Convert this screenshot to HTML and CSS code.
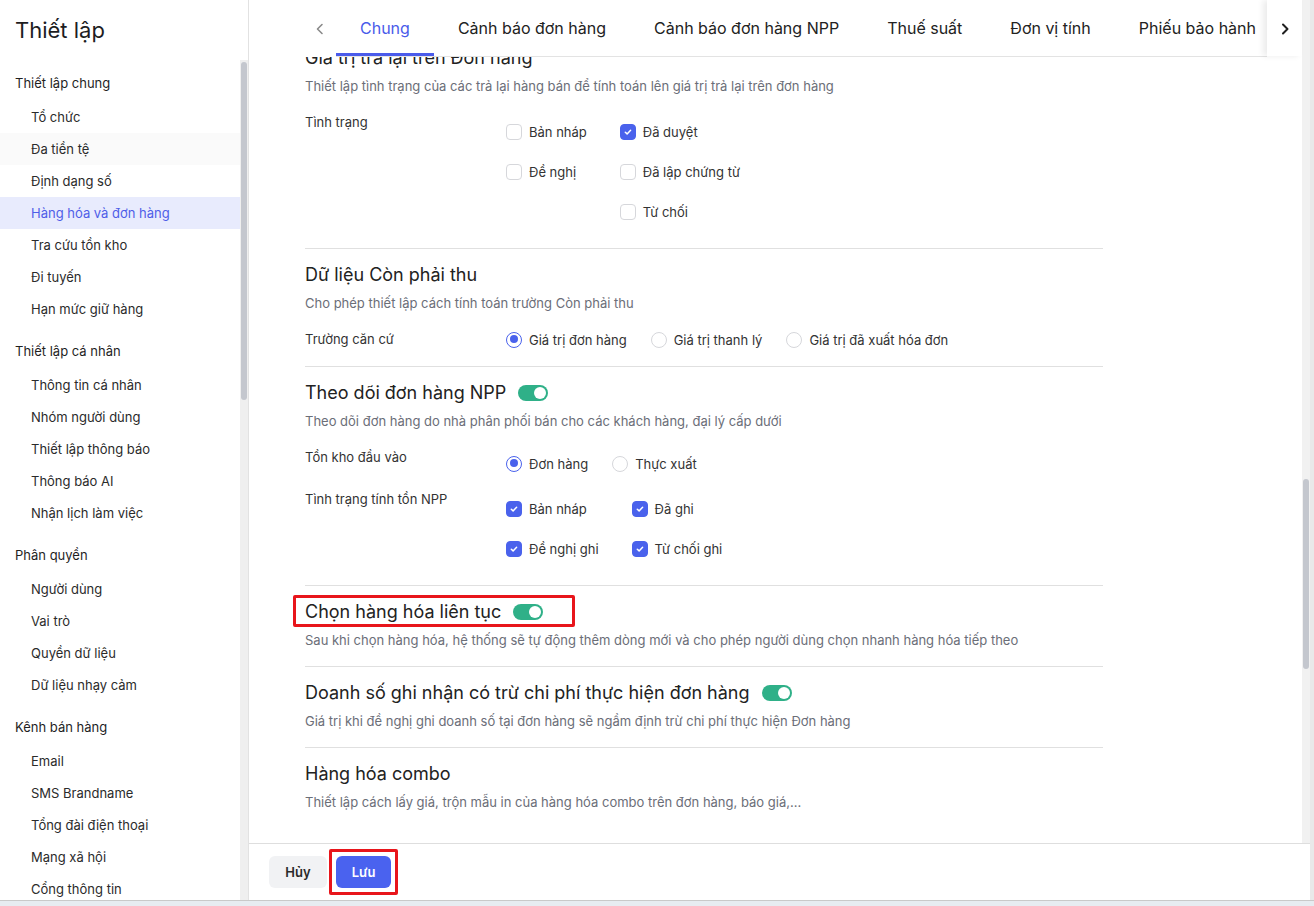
FILE: index.html
```html
<!DOCTYPE html>
<html lang="vi">

<head>
    <meta charset="UTF-8">
    <meta name="viewport" content="width=device-width, initial-scale=1.0">
    <title>Thiết lập</title>
    <link rel="stylesheet" href="styles.css">
</head>

<body>
    <div class="app">
        <aside class="sidebar">
            <div class="sideHead">Thiết lập</div>
            <div class="sideBody">
                <nav class="menu">
                    <div class="group">
                        <div class="groupTitle">Thiết lập chung</div>
                        <div class="item">Tổ chức</div>
                        <div class="item hover">Đa tiền tệ</div>
                        <div class="item">Định dạng số</div>
                        <div class="item active">Hàng hóa và đơn hàng</div>
                        <div class="item">Tra cứu tồn kho</div>
                        <div class="item">Đi tuyến</div>
                        <div class="item">Hạn mức giữ hàng</div>
                    </div>
                    <div class="group">
                        <div class="groupTitle">Thiết lập cá nhân</div>
                        <div class="item">Thông tin cá nhân</div>
                        <div class="item">Nhóm người dùng</div>
                        <div class="item">Thiết lập thông báo</div>
                        <div class="item">Thông báo AI</div>
                        <div class="item">Nhận lịch làm việc</div>
                    </div>
                    <div class="group">
                        <div class="groupTitle">Phân quyền</div>
                        <div class="item">Người dùng</div>
                        <div class="item">Vai trò</div>
                        <div class="item">Quyền dữ liệu</div>
                        <div class="item">Dữ liệu nhạy cảm</div>
                    </div>
                    <div class="group">
                        <div class="groupTitle">Kênh bán hàng</div>
                        <div class="item">Email</div>
                        <div class="item">SMS Brandname</div>
                        <div class="item">Tổng đài điện thoại</div>
                        <div class="item">Mạng xã hội</div>
                        <div class="item">Cổng thông tin</div>
                    </div>
                </nav>
                <div class="track sideTrack">
                    <div class="thumb sideThumb"></div>
                </div>
            </div>
        </aside>

        <main class="main">
            <div class="scrollWrap">
                <div class="mainCol">
                    <div class="tabBar">
                        <div class="tabArrow left">
                            <svg width="10" height="12" viewBox="0 0 10 12"><path d="M7 1.5 2.5 6 7 10.5" fill="none" stroke="#8a8a8a" stroke-width="1.6" stroke-linecap="round" stroke-linejoin="round"/></svg>
                        </div>
                        <div class="tabList">
                            <div class="tab active">Chung</div>
                            <div class="tab">Cảnh báo đơn hàng</div>
                            <div class="tab">Cảnh báo đơn hàng NPP</div>
                            <div class="tab">Thuế suất</div>
                            <div class="tab">Đơn vị tính</div>
                            <div class="tab">Phiếu bảo hành</div>
                        </div>
                        <div class="tabArrow right">
                            <svg width="10" height="12" viewBox="0 0 10 12"><path d="M3 1.5 7.5 6 3 10.5" fill="none" stroke="#1f1f1f" stroke-width="2" stroke-linecap="round" stroke-linejoin="round"/></svg>
                        </div>
                    </div>

                    <div class="content">
                        <div class="inner">
                            <section class="sec">
                                <div class="secTitle">Giá trị trả lại trên Đơn hàng</div>
                                <div class="secDesc">Thiết lập tình trạng của các trả lại hàng bán để tính toán lên giá trị trả lại trên đơn hàng</div>
                                <div class="row">
                                    <div class="label">Tình trạng</div>
                                    <div class="checkGrid">
                                        <label class="opt"><span class="cb"></span>Bản nháp</label>
                                        <label class="opt"><span class="cb on"></span>Đã duyệt</label>
                                        <label class="opt"><span class="cb"></span>Đề nghị</label>
                                        <label class="opt"><span class="cb"></span>Đã lập chứng từ</label>
                                        <span></span>
                                        <label class="opt"><span class="cb"></span>Từ chối</label>
                                    </div>
                                </div>
                            </section>

                            <section class="sec">
                                <div class="secTitle">Dữ liệu Còn phải thu</div>
                                <div class="secDesc">Cho phép thiết lập cách tính toán trường Còn phải thu</div>
                                <div class="row">
                                    <div class="label">Trường căn cứ</div>
                                    <div class="radioRow">
                                        <label class="opt radio"><span class="rd on"></span>Giá trị đơn hàng</label>
                                        <label class="opt radio"><span class="rd"></span>Giá trị thanh lý</label>
                                        <label class="opt radio"><span class="rd"></span>Giá trị đã xuất hóa đơn</label>
                                    </div>
                                </div>
                            </section>

                            <section class="sec">
                                <div class="secTitle">Theo dõi đơn hàng NPP <span class="toggle"></span></div>
                                <div class="secDesc">Theo dõi đơn hàng do nhà phân phối bán cho các khách hàng, đại lý cấp dưới</div>
                                <div class="row">
                                    <div class="label">Tồn kho đầu vào</div>
                                    <div class="radioRow shift">
                                        <label class="opt radio"><span class="rd on"></span>Đơn hàng</label>
                                        <label class="opt radio"><span class="rd"></span>Thực xuất</label>
                                    </div>
                                </div>
                                <div class="row next">
                                    <div class="label">Tình trạng tính tồn NPP</div>
                                    <div class="checkGrid">
                                        <label class="opt"><span class="cb on"></span>Bản nháp</label>
                                        <label class="opt"><span class="cb on"></span>Đã ghi</label>
                                        <label class="opt"><span class="cb on"></span>Đề nghị ghi</label>
                                        <label class="opt"><span class="cb on"></span>Từ chối ghi</label>
                                    </div>
                                </div>
                            </section>

                            <section class="sec">
                                <div class="secTitle marked">Chọn hàng hóa liên tục <span class="toggle"></span></div>
                                <div class="secDesc">Sau khi chọn hàng hóa, hệ thống sẽ tự động thêm dòng mới và cho phép người dùng chọn nhanh hàng hóa tiếp theo</div>
                            </section>

                            <section class="sec">
                                <div class="secTitle">Doanh số ghi nhận có trừ chi phí thực hiện đơn hàng <span class="toggle"></span></div>
                                <div class="secDesc">Giá trị khi đề nghị ghi doanh số tại đơn hàng sẽ ngầm định trừ chi phí thực hiện Đơn hàng</div>
                            </section>

                            <section class="sec last">
                                <div class="secTitle">Hàng hóa combo</div>
                                <div class="secDesc">Thiết lập cách lấy giá, trộn mẫu in của hàng hóa combo trên đơn hàng, báo giá,...</div>
                            </section>
                        </div>
                    </div>
                </div>
                <div class="track mainTrack">
                    <div class="thumb mainThumb"></div>
                </div>
            </div>

            <footer class="footer">
                <button class="btn cancel">Hủy</button>
                <button class="btn save marked">Lưu</button>
            </footer>
        </main>
    </div>
    <div class="bottomBar"></div>
</body>

</html>
```

FILE: styles.css
```css
* {
    margin: 0;
    padding: 0;
    box-sizing: border-box;
}

body {
    width: 1314px;
    height: 906px;
    overflow: hidden;
    background: #fff;
    font-family: Inter, "Noto Sans", sans-serif;
    color: #222;
}

.app {
    display: flex;
    height: 900px;
}

/* sidebar */
.sidebar {
    width: 249px;
    flex-shrink: 0;
    border-right: 1px solid #e2e2e2;
    display: flex;
    flex-direction: column;
}

.sideHead {
    height: 60px;
    padding-left: 15px;
    line-height: 60px;
    font-size: 22px;
    color: #1d1d1f;
}

.sideBody {
    flex: 1;
    display: flex;
    min-height: 0;
}

.menu {
    flex: 1;
    padding-top: 6px;
}

.group + .group {
    margin-top: 9px;
}

.groupTitle {
    height: 35px;
    line-height: 35px;
    padding-left: 15px;
    font-size: 13px;
    color: #1f1f1f;
}

.item {
    height: 32px;
    line-height: 32px;
    padding-left: 31px;
    font-size: 13px;
    color: #2b2b2b;
}

.item.hover {
    background: #fafafa;
}

.item.active {
    background: #e8ebfd;
    color: #4f5ee8;
}

.track {
    width: 8px;
    background: #efefef;
}

.thumb {
    width: 6px;
    margin-left: 1px;
    border-radius: 3px;
    background: #c4c7ce;
}

.sideThumb {
    margin-top: 2px;
    height: 338px;
}

/* main */
.main {
    flex: 1;
    display: flex;
    flex-direction: column;
    border-right: 4px solid #e9e9e9;
    min-width: 0;
}

.scrollWrap {
    height: 843px;
    display: flex;
}

.mainCol {
    flex: 1;
    min-width: 0;
    display: flex;
    flex-direction: column;
}

.mainTrack {
    background: #f1f1f1;
}

.mainThumb {
    margin-top: 479px;
    height: 190px;
}

.tabBar {
    height: 57px;
    display: flex;
    padding-left: 54px;
    position: relative;
    z-index: 2;
    background: #fff;
}

.tabArrow {
    width: 33px;
    display: flex;
    align-items: center;
    justify-content: center;
    height: 56px;
    padding-top: 2px;
}

.tabArrow.right {
    width: 35px;
    background: #fff;
    box-shadow: -4px 0 6px rgba(0, 0, 0, .08);
}

.tabList {
    flex: 1;
    display: flex;
    overflow: hidden;
    border-bottom: 1px solid #e3e3e3;
}

.tab {
    flex-shrink: 0;
    padding: 3px 24px 0;
    line-height: 50px;
    font-size: 16px;
    color: #222;
    border-bottom: 3px solid transparent;
    white-space: nowrap;
}

.tab.active {
    color: #4a5bea;
    border-bottom-color: #4a5bea;
}

.content {
    flex: 1;
    overflow: hidden;
    padding-left: 56px;
}

.inner {
    width: 798px;
    margin-top: -25px;
}

.sec {
    padding: 13px 0 16px;
    border-bottom: 1px solid #e0e0e0;
}

.sec.last {
    border-bottom: none;
}

.secTitle {
    display: flex;
    align-items: center;
    gap: 12px;
    width: fit-content;
    height: 24px;
    padding-top: 1px;
    font-size: 18px;
    color: #222;
    position: relative;
}

.secDesc {
    margin-top: 7px;
    line-height: 20px;
    font-size: 13px;
    color: #6b6e78;
}

.toggle {
    width: 30px;
    height: 16px;
    border-radius: 8px;
    background: #2fb088;
    position: relative;
}

.toggle::after {
    content: "";
    position: absolute;
    right: 2px;
    top: 2px;
    width: 12px;
    height: 12px;
    border-radius: 50%;
    background: #fff;
}

.marked::after {
    content: "";
    position: absolute;
    border: 3px solid #e8151b;
    border-radius: 2px;
}

.secTitle.marked::after {
    left: -12px;
    right: -32px;
    top: -4px;
    bottom: -4px;
}

.row {
    display: flex;
    margin-top: 16px;
}

.row.next {
    margin-top: 15px;
}

.label {
    width: 201px;
    flex-shrink: 0;
    line-height: 20px;
    font-size: 13px;
    color: #333;
}

.checkGrid {
    display: grid;
    grid-template-columns: auto auto;
    justify-content: start;
    column-gap: 33px;
}

.opt {
    display: flex;
    align-items: center;
    gap: 7px;
    height: 40px;
    font-size: 13px;
    color: #333;
}

.radioRow {
    display: flex;
    gap: 24px;
}

.radioRow.shift {
    padding-top: 6px;
}

.opt.radio {
    height: 21px;
}

.cb {
    width: 16px;
    height: 16px;
    border: 1px solid #d6d7db;
    border-radius: 4px;
    background: #fff;
}

.cb.on {
    border-color: #4a62ec;
    background: #4a62ec url("data:image/svg+xml,%3Csvg xmlns='http://www.w3.org/2000/svg' width='16' height='16'%3E%3Cpath d='M5.3 8.2 7.1 9.9 10.6 6.2' fill='none' stroke='white' stroke-width='1.5' stroke-linecap='round' stroke-linejoin='round'/%3E%3C/svg%3E") center / 16px 16px no-repeat;
}

.rd {
    width: 16px;
    height: 16px;
    border: 1px solid #d6d7db;
    border-radius: 50%;
    position: relative;
}

.rd.on {
    border: 1.5px solid #4a62ec;
}

.rd.on::after {
    content: "";
    position: absolute;
    left: 2.5px;
    top: 2.5px;
    width: 8px;
    height: 8px;
    border-radius: 50%;
    background: #4a62ec;
}

/* footer */
.footer {
    height: 57px;
    border-top: 1px solid #dedede;
    display: flex;
    align-items: center;
    gap: 9px;
    padding-left: 20px;
}

.btn {
    height: 32px;
    border: none;
    border-radius: 6px;
    font-family: inherit;
    font-size: 13px;
    font-weight: 600;
    position: relative;
}

.cancel {
    width: 58px;
    background: #f1f2f4;
    color: #2a2a2a;
}

.save {
    width: 55px;
    background: #4a62ef;
    color: #fff;
}

.btn.marked::after {
    left: -7px;
    right: -7px;
    top: -7px;
    bottom: -7px;
}

.bottomBar {
    height: 6px;
    border-top: 1px solid #c9c9c9;
    background: #e7ecf1;
}
```
